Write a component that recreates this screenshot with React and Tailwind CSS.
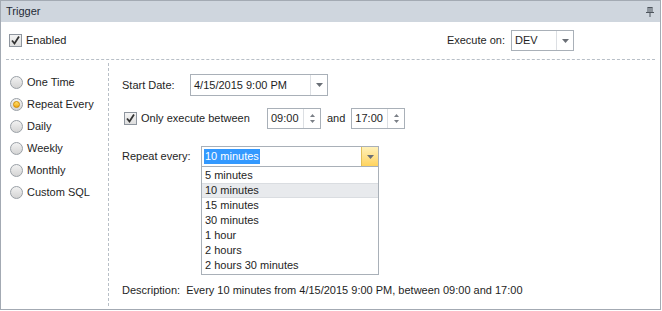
import React from 'react';

const font = { fontFamily: "'Segoe UI', 'Liberation Sans', Arial, sans-serif" };

const Check = ({ checked }) => (
    <span className="w-[13px] h-[13px] border border-[#8e959e] bg-gradient-to-b from-[#f4f4f4] to-[#dedede] flex items-center justify-center flex-none">
        {checked && (
            <svg width="11" height="11" viewBox="0 0 11 11">
                <path d="M2 5.5 L4.5 8.5 L9 1.5" stroke="#333" strokeWidth="1.8" fill="none" />
            </svg>
        )}
    </span>
);

const Radio = ({ checked, label }) => (
    <div className="flex items-center gap-[4px] h-[22px]">
        <span className="w-[13px] h-[13px] rounded-full border border-[#9aa0a6] bg-gradient-to-b from-[#f2f2f2] to-[#d4d4d4] flex items-center justify-center">
            {checked && <span className="w-[7px] h-[7px] rounded-full bg-gradient-to-b from-[#ffe36a] to-[#f0a800] border border-[#d08a00]" />}
        </span>
        <span className="text-[11px] leading-[15px] text-[#1e1e1e]">{label}</span>
    </div>
);

const Arrow = () => (
    <svg width="7" height="4" viewBox="0 0 7 4"><path d="M0 0 H7 L3.5 4 Z" fill="#6a6f76" /></svg>
);

const Spin = ({ value }) => (
    <div className="flex h-[21px] w-[54px] border border-[#a9b0b8] bg-white">
        <span className="flex-1 pl-[3px] text-[11px] leading-[19px] text-[#1e1e1e]">{value}</span>
        <span className="w-[17px] border-l border-[#dcdfe3] flex flex-col items-center justify-center gap-[3px]">
            <svg width="5" height="3" viewBox="0 0 5 3"><path d="M0 3 H5 L2.5 0 Z" fill="#7a7f86" /></svg>
            <svg width="5" height="3" viewBox="0 0 5 3"><path d="M0 0 H5 L2.5 3 Z" fill="#7a7f86" /></svg>
        </span>
    </div>
);

const options = ['5 minutes', '10 minutes', '15 minutes', '30 minutes', '1 hour', '2 hours', '2 hours 30 minutes'];

export default function App() {
    return (
        <div className="w-[662px] h-[311px] bg-white" style={font}>
            <div className="w-[661px] h-[310px] border border-[#a3aab3] flex flex-col">
                {/* Header */}
                <div className="h-[21px] bg-[#cfd6de] flex items-center justify-between pl-[5px] pr-[6px] flex-none">
                    <span className="text-[11px] text-[#1f2a36]">Trigger</span>
                    <svg width="8" height="10" viewBox="0 0 8 10">
                        <path d="M1.5 0.5 H6.5 M2 0.5 V5.5 M6 0.5 V5.5 M4 1 V5.5 M0 5.5 H8 M4 5.5 V10" stroke="#4d545c" strokeWidth="1" fill="none" />
                    </svg>
                </div>

                {/* Top row */}
                <div className="h-[37px] flex items-center justify-between pl-[8px] pr-[86px] flex-none">
                    <div className="flex items-center gap-[4px]">
                        <Check checked />
                        <span className="text-[11px] text-[#1e1e1e]">Enabled</span>
                    </div>
                    <div className="flex items-center gap-[6px]">
                        <span className="text-[11px] text-[#1e1e1e]">Execute on:</span>
                        <div className="flex h-[21px] w-[63px] border border-[#a9b0b8] bg-white">
                            <span className="flex-1 pl-[3px] text-[11px] leading-[19px] text-[#1e1e1e]">DEV</span>
                            <span className="w-[17px] border-l border-[#dcdfe3] flex items-center justify-center"><Arrow /></span>
                        </div>
                    </div>
                </div>
                <div className="mx-[5px] border-t border-dashed border-[#b8bfc7] flex-none" />

                {/* Body */}
                <div className="flex flex-1 min-h-0">
                    <div className="w-[108px] flex-none my-[3px] border-r border-dashed border-[#b8bfc7] pl-[9px] pt-[8px]">
                        <Radio label="One Time" />
                        <Radio checked label="Repeat Every" />
                        <Radio label="Daily" />
                        <Radio label="Weekly" />
                        <Radio label="Monthly" />
                        <Radio label="Custom SQL" />
                    </div>

                    <div className="flex-1 pl-[13px] pt-[14px] flex flex-col">
                        <div className="flex items-center h-[22px]">
                            <span className="w-[68px] text-[11px] text-[#1e1e1e]">Start Date:</span>
                            <div className="flex h-[22px] w-[138px] border border-[#a9b0b8] bg-white">
                                <span className="flex-1 pl-[3px] text-[11px] leading-[20px] text-[#1e1e1e]">4/15/2015 9:00 PM</span>
                                <span className="w-[17px] border-l border-[#dcdfe3] flex items-center justify-center"><Arrow /></span>
                            </div>
                        </div>

                        <div className="flex items-center h-[21px] mt-[12px]">
                            <span className="ml-[2px]"><Check checked /></span>
                            <span className="ml-[4px] w-[126px] text-[11px] text-[#1e1e1e]">Only execute between</span>
                            <Spin value="09:00" />
                            <span className="mx-[6px] text-[11px] text-[#1e1e1e]">and</span>
                            <Spin value="17:00" />
                        </div>

                        <div className="flex items-start mt-[17px]">
                            <span className="w-[79px] text-[11px] leading-[20px] text-[#1e1e1e]">Repeat every:</span>
                            <div className="flex flex-col w-[178px]">
                                <div className="flex h-[21px] border border-[#a9b0b8] bg-white">
                                    <span className="flex-1 pl-[2px] flex items-center">
                                        <span className="bg-[#3399ff] text-white text-[11px] leading-[15px] px-[1px]">10 minutes</span>
                                    </span>
                                    <span className="w-[17px] bg-gradient-to-b from-[#fff1b8] to-[#ffd35c] border-l border-[#e2c05a] flex items-center justify-center"><Arrow /></span>
                                </div>
                                <div className="border border-t-0 border-[#a9b0b8] bg-white py-[1px]">
                                    {options.map((o) => (
                                        <div key={o} className={o === '10 minutes'
                                            ? 'h-[15px] pl-[3px] text-[11px] leading-[13px] text-[#1e1e1e] bg-[#e8eaed] border-y border-[#dadde1]'
                                            : 'h-[15px] pl-[3px] text-[11px] leading-[15px] text-[#1e1e1e]'}>{o}</div>
                                    ))}
                                </div>
                            </div>
                        </div>

                        <div className="mt-[7px] text-[11px] text-[#1e1e1e]">
                            Description:&nbsp; Every 10 minutes from 4/15/2015 9:00 PM, between 09:00 and 17:00
                        </div>
                    </div>
                </div>
            </div>
        </div>
    );
}
